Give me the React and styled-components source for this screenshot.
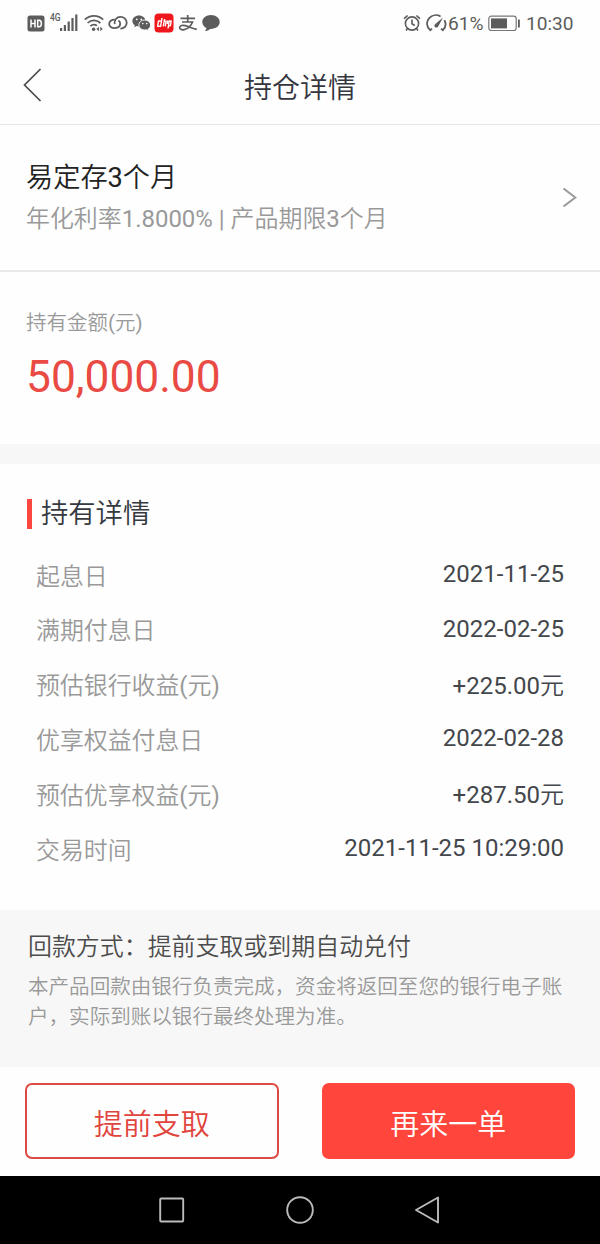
import { styled, createGlobalStyle } from 'styled-components'

const GlobalStyle = createGlobalStyle`
    * {
        box-sizing: border-box;
    }
    body {
        margin: 0;
        background: #fefefe;
        font-family: Roboto, "Noto Sans CJK SC DemiLight", "Noto Sans CJK SC Light", "Noto Sans CJK SC", sans-serif;
        -webkit-font-smoothing: antialiased;
    }
`;

const Page = styled.div`
    display: flex;
    flex-direction: column;
    width: 600px;
    height: 1244px;
    overflow: hidden;
    background: #fefefe;
`;

// Status bar
const StatusBar = styled.div`
    display: flex;
    justify-content: space-between;
    align-items: center;
    height: 46px;
    padding: 0 27px;
    color: #5c5c5c;

    svg {
        display: block;
        flex: none;
    }
`;

const StatusGroup = styled.div`
    display: flex;
    align-items: center;
    height: 46px;
    gap: ${props => props.$gap};
`;

const IconSlot = styled.span`
    margin-right: ${props => props.$right};
`;

const StatusText = styled.span`
    width: ${props => props.$width};
    padding-top: 2px;
    font-size: 19.1px;
    line-height: 24px;
    white-space: nowrap;
`;

const NetworkText = styled.span`
    align-self: flex-start;
    width: 10px;
    margin: 12px -4px 0 1px;
    font-size: 10px;
    line-height: 12px;
    font-weight: 500;
    transform: scaleX(0.85);
    transform-origin: left;
`;

// Title bar
const TitleBar = styled.header`
    display: grid;
    grid-template-columns: 60px 1fr 60px;
    align-items: center;
    height: 79px;
    border-bottom: 1px solid #e6e6e6;
`;

const BackButton = styled.button`
    display: flex;
    padding: 0 0 0 22px;
    border: none;
    background: none;
`;

const Title = styled.h1`
    margin: 0;
    padding-top: 8px;
    font-size: 28px;
    line-height: 40px;
    font-weight: 400;
    text-align: center;
    color: #35363e;
`;

// Product
const Product = styled.section`
    display: flex;
    justify-content: space-between;
    align-items: center;
    height: 147px;
    padding: 2px 22px 0 26px;
    border-bottom: 2px solid #e9e9e9;
`;

const ProductName = styled.div`
    font-size: 27.2px;
    line-height: 42px;
    color: #222;
`;

const ProductInfo = styled.div`
    font-size: 23.95px;
    line-height: 40px;
    color: #999;
`;

// Amount
const Amount = styled.section`
    height: 192px;
    padding: 35px 26px 0;
    border-bottom: 20px solid #f7f7f7;
`;

const AmountLabel = styled.div`
    font-size: 20.5px;
    line-height: 32px;
    color: #999;
`;

const AmountValue = styled.div`
    margin-top: 11px;
    font-size: 44.3px;
    line-height: 54px;
    color: #e94a43;
`;

// Details
const Details = styled.section`
    height: 447px;
    padding: 30px 36px 0 27px;
`;

const DetailsTitle = styled.h2`
    display: flex;
    align-items: center;
    gap: 9px;
    margin: 0 0 13px;
    font-size: 27.3px;
    line-height: 40px;
    font-weight: 400;
    color: #343a40;

    &::before {
        content: '';
        width: 5px;
        height: 30px;
        background: #fb483f;
    }
`;

const Row = styled.div`
    display: flex;
    justify-content: space-between;
    align-items: center;
    height: 54.8px;
    padding-left: 9px;
    font-size: 24px;
    line-height: 36px;
`;

const Label = styled.span`
    padding-top: 5px;
    font-size: 23.9px;
    color: #999;
`;

const Value = styled.span`
    padding-top: ${props => props.$money ? '4px' : '0'};
    color: #43474b;
`;

// Notice
const Notice = styled.section`
    height: 157px;
    padding: 18px 28px 0;
    background: #f7f7f7;
`;

const NoticeTitle = styled.div`
    font-size: 23.95px;
    line-height: 38px;
    color: #4c4c4c;
    white-space: nowrap;
`;

const NoticeText = styled.p`
    margin: 6px 0 0;
    font-size: 20.55px;
    line-height: 30px;
    color: #999;
    white-space: nowrap;
`;

// Buttons
const Actions = styled.div`
    display: flex;
    gap: 43px;
    height: 109px;
    padding: 16px 25px 17px;
`;

const Button = styled.button`
    flex: 1;
    padding: 7px 0 0;
    border: 2px solid ${props => props.$primary ? '#ff453c' : '#dd4a44'};
    border-radius: 7px;
    background: ${props => props.$primary ? '#ff453c' : '#fefefe'};
    color: ${props => props.$primary ? '#fff' : '#e0443d'};
    font-family: inherit;
    font-size: 29px;
    line-height: 42px;
`;

const NavBar = styled.nav`
    display: flex;
    justify-content: center;
    align-items: center;
    gap: 100px;
    height: 68px;
    background: #000;
`;

const rows = [
    { label: '起息日', value: '2021-11-25' },
    { label: '满期付息日', value: '2022-02-25' },
    { label: '预估银行收益(元)', value: '+225.00元', money: true },
    { label: '优享权益付息日', value: '2022-02-28' },
    { label: '预估优享权益(元)', value: '+287.50元', money: true },
    { label: '交易时间', value: '2021-11-25 10:29:00' },
];

const HdIcon = () => (
    <svg width="18" height="17" viewBox="0 0 18 17">
        <rect x="0.5" y="0.5" width="17" height="16" rx="2.5" fill="#5c5c5c" />
        <path d="M4 4.5v8M8 4.5v8M4 8.5h4M10.7 5.2v6.6h1.3c1.6 0 2.4-1.2 2.4-3.3s-.8-3.3-2.4-3.3z" fill="none" stroke="#fff" strokeWidth="1.5" />
    </svg>
);

const SignalIcon = () => (
    <svg width="18" height="18" viewBox="0 0 18 18" fill="#5c5c5c">
        <rect x="0" y="14" width="2.2" height="3" />
        <rect x="3.8" y="11" width="2.2" height="6" />
        <rect x="7.6" y="7.5" width="2.2" height="9.5" />
        <rect x="11.4" y="4" width="2.2" height="13" />
        <rect x="15.2" y="0.5" width="2.2" height="16.5" />
    </svg>
);

const WifiIcon = () => (
    <svg width="20" height="18" viewBox="0 0 20 18" fill="none" stroke="#5c5c5c" strokeWidth="1.7">
        <path d="M0.8 5.6C6 .5 14 .5 19.2 5.6M3.6 9c3.7-3.5 9-3.5 12.8 0M6.4 12.2c1.8-1.8 4.5-2 6.6-.6" />
        <circle cx="9.6" cy="15.2" r="1.7" fill="#5c5c5c" stroke="none" />
        <path d="M14.9 12.8v4.4L12.4 15zM16.3 12.8v4.4l2.5-2.2z" fill="#5c5c5c" stroke="none" />
    </svg>
);

const LinkIcon = () => (
    <svg width="20" height="16" viewBox="0 0 20 16" fill="none" stroke="#5c5c5c" strokeWidth="1.8">
        <path d="M6.8 4.6C3.7 4.4 1.200 6.300 1.200 8.900c0 2.700 2.500 4.300 5.500 4.200 3.300-.1 5.500-2 5.500-4.500 0-1.300-.7-2.300-1.800-3" />
        <path d="M6.700 9.200C6 5.200 8.600 1.900 12.500 1.900c3.500 0 6.200 2.600 6.200 5.900 0 3.400-2.800 5.900-6.300 5.800" />
    </svg>
);

const WechatIcon = () => (
    <svg width="19" height="16" viewBox="0 0 19 16">
        <path d="M7 .5C3.2.5.4 2.9.4 6c0 1.8.9 3.3 2.4 4.3l-.5 2 2.4-1.2c.8.2 1.5.3 2.3.3 3.7 0 6.6-2.4 6.600-5.400S10.700.5 7 .5z" fill="#5c5c5c" />
        <path d="M12.7 5c-3.300 0-5.900 2.200-5.900 5s2.600 5 5.900 5c.7 0 1.300-.1 1.900-.3l2.200 1.200-.6-1.900c1.500-.9 2.400-2.300 2.400-4 0-2.800-2.600-5-5.900-5z" fill="#5c5c5c" stroke="#fefefe" strokeWidth="0.9" />
        <g fill="#fefefe">
            <circle cx="4.8" cy="4.3" r="0.9" />
            <circle cx="9.2" cy="4.3" r="0.9" />
            <circle cx="10.8" cy="8.6" r="0.8" />
            <circle cx="14.7" cy="8.6" r="0.8" />
        </g>
    </svg>
);

const RedAppIcon = () => (
    <svg width="20" height="20" viewBox="0 0 20 20">
        <rect x="0.5" y="0.5" width="19" height="19" rx="4" fill="#f0171c" />
        <g fill="none" stroke="#fff" strokeWidth="1.4" strokeLinejoin="round">
            <path d="M8 5L6.600 13.300H3.600L4.500 8h2.200" />
            <path d="M10.600 6L9.300 13.300M9.600 8h1.800M12.200 7.500l-.9 5.800" />
            <path d="M14 15.500L15.200 8h2l-.8 4.700h-2.600M13.800 7.500l-.6 3.500" />
        </g>
    </svg>
);

const AlipayIcon = () => (
    <svg width="20" height="18" viewBox="0 0 20 18" fill="none" stroke="#5c5c5c" strokeWidth="1.7">
        <path d="M2.5 4.3h14.5M9.7 1v7M4 8h10.500c-1.300 3.500-4.500 6.800-8.300 7.600-2.700.6-4.700-.5-4.500-2.300.2-1.900 2.900-2.400 5.600-1.700 3.500.9 6.500 3 11.500 3.700" />
    </svg>
);

const BubbleIcon = () => (
    <svg width="18" height="18" viewBox="0 0 18 18" fill="#5c5c5c">
        <path d="M9 1C4.2 1 .3 4 .3 8c0 2.600 1.600 4.800 4.100 6-.1 1.300-.7 2.300-1.600 3.100 2.100-.1 3.900-.9 5.200-2.200h1c4.800 0 8.700-3 8.700-6.900S13.800 1 9 1z" />
    </svg>
);

const AlarmIcon = () => (
    <svg width="18" height="18" viewBox="0 0 18 18" fill="none" stroke="#5c5c5c" strokeWidth="1.6">
        <circle cx="9" cy="9.5" r="6.6" />
        <path d="M9 5.5v4.3l2.7 1.7M1 4.7l3.6-3.2M17 4.7l-3.6-3.2M4.6 14.5l-1.6 2M13.4 14.5l1.6 2" />
    </svg>
);

const GaugeIcon = () => (
    <svg width="21" height="18" viewBox="0 0 21 18" fill="none" stroke="#5c5c5c" strokeWidth="1.8">
        <path d="M6 14.6l-1.8 1.6C.4 12.8 0 7.7 3.2 4.2 6.2.9 10.9.3 14.6 2.5M18.4 6.1c1.9 3.4 1.3 7.2-1.5 10.1l-1.9-1.6" />
        <path d="M17 3.6L12.3 12.2a2 2 0 1 1-3-2.3z" fill="#5c5c5c" stroke="none" />
    </svg>
);

const BatteryIcon = () => (
    <svg width="33" height="17" viewBox="0 0 33 17">
        <rect x="0.8" y="1.2" width="27.4" height="14.3" rx="2.5" fill="none" stroke="#777" strokeWidth="1.2" />
        <rect x="3" y="3.4" width="16" height="10" fill="#5c5c5c" />
        <rect x="30" y="4.5" width="1.8" height="8" fill="#5c5c5c" />
    </svg>
);

const App = () => {
    return (
        <>
            <GlobalStyle />
            <Page>
                <StatusBar>
                    <StatusGroup $gap="4.1px">
                        <HdIcon />
                        <NetworkText>4G</NetworkText>
                        <IconSlot $right="1.6px"><SignalIcon /></IconSlot>
                        <WifiIcon />
                        <LinkIcon />
                        <IconSlot $right="-1.6px"><WechatIcon /></IconSlot>
                        <RedAppIcon />
                        <AlipayIcon />
                        <BubbleIcon />
                    </StatusGroup>
                    <StatusGroup $gap="5px">
                        <AlarmIcon />
                        <IconSlot $right="-4px"><GaugeIcon /></IconSlot>
                        <StatusText $width="35px">61%</StatusText>
                        <BatteryIcon />
                        <StatusText $width="47px">10:30</StatusText>
                    </StatusGroup>
                </StatusBar>
                <TitleBar>
                    <BackButton>
                        <svg width="20" height="34" viewBox="0 0 20 34" fill="none" stroke="#4a4a4a" strokeWidth="1.7">
                            <path d="M18.5 1L2.5 17l16 16" />
                        </svg>
                    </BackButton>
                    <Title>持仓详情</Title>
                </TitleBar>
                <Product>
                    <div>
                        <ProductName>易定存3个月</ProductName>
                        <ProductInfo>年化利率1.8000% | 产品期限3个月</ProductInfo>
                    </div>
                    <svg width="16" height="22" viewBox="0 0 16 22" fill="none" stroke="#999" strokeWidth="2">
                        <path d="M1.5 1.5l11.8 9-11.8 9" />
                    </svg>
                </Product>
                <Amount>
                    <AmountLabel>持有金额(元)</AmountLabel>
                    <AmountValue>50,000.00</AmountValue>
                </Amount>
                <Details>
                    <DetailsTitle>持有详情</DetailsTitle>
                    {rows.map(({ label, value, money }) => (
                        <Row key={label}>
                            <Label>{label}</Label>
                            <Value $money={money}>{value}</Value>
                        </Row>
                    ))}
                </Details>
                <Notice>
                    <NoticeTitle>回款方式：提前支取或到期自动兑付</NoticeTitle>
                    <NoticeText>
                        本产品回款由银行负责完成，资金将返回至您的银行电子账
                        <br />
                        户，实际到账以银行最终处理为准。
                    </NoticeText>
                </Notice>
                <Actions>
                    <Button>提前支取</Button>
                    <Button $primary>再来一单</Button>
                </Actions>
                <NavBar>
                    <svg width="28" height="28" viewBox="0 0 28 28" fill="none" stroke="#bbb" strokeWidth="1.9">
                        <rect x="2.2" y="2.5" width="23" height="23" rx="1" />
                    </svg>
                    <svg width="28" height="28" viewBox="0 0 28 28" fill="none" stroke="#bbb" strokeWidth="1.9">
                        <circle cx="14" cy="14" r="12.8" />
                    </svg>
                    <svg width="28" height="28" viewBox="0 0 28 28" fill="none" stroke="#bbb" strokeWidth="1.9" strokeLinejoin="round">
                        <path d="M24 1.5v25L2 14z" />
                    </svg>
                </NavBar>
            </Page>
        </>
    )
}


export default App;
